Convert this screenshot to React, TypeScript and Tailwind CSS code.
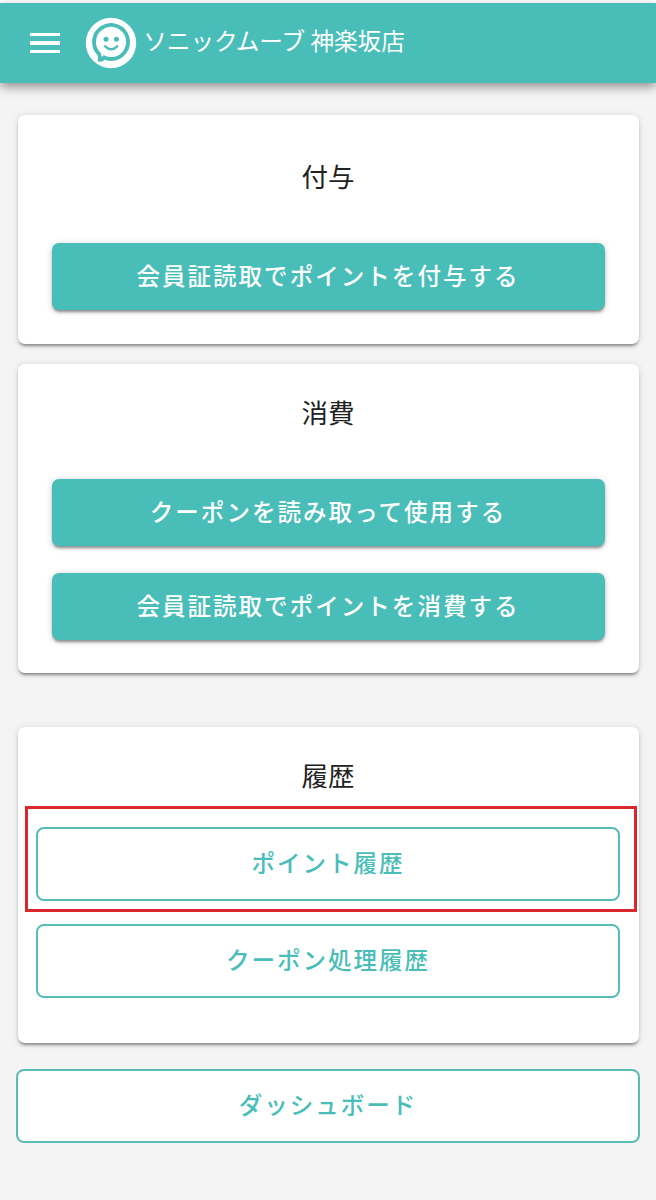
import React from 'react';
import clsx from 'clsx';

interface ButtonProps {
  label: string;
  className?: string;
}

interface CardProps {
  title: string;
  className?: string;
  children: React.ReactNode;
}

const LogoIcon: React.FC = () => (
  <svg className="ml-[24.6px] h-[52px] w-[52px] shrink-0" viewBox="0 0 52 52" fill="none">
    <circle cx="26" cy="26" r="25.2" fill="#fff" />
    {/* Speech bubble */}
    <path
      d="M14.2 37.2A17 17 0 1 1 26 42C23.5 42 21 41.4 19.2 40.4C18.2 42.2 16.6 43 14.6 42.8C15.2 41 15 39 14.2 37.2Z"
      stroke="#49bdb7"
      strokeWidth="3.9"
      strokeLinejoin="round"
    />
    {/* Face */}
    <circle cx="21" cy="22.3" r="2.5" fill="#49bdb7" />
    <circle cx="31.4" cy="22.3" r="2.5" fill="#49bdb7" />
    <path d="M20.2 29.3Q26.2 35.2 32.2 29.3" stroke="#49bdb7" strokeWidth="2.4" strokeLinecap="round" />
  </svg>
);

const Header: React.FC = () => (
  <header className="mt-[3px] flex h-20 items-center bg-[#49bdb7] pl-[30px] text-white shadow-[0_4px_10px_rgba(0,0,0,0.4)]">
    <button className="flex w-[30px] flex-col gap-[5px]" aria-label="menu">
      <span className="h-[3.5px] bg-white" />
      <span className="h-[3.5px] bg-white" />
      <span className="h-[3.5px] bg-white" />
    </button>
    <LogoIcon />
    <h1 className="-mt-[7px] ml-[6.7px] whitespace-nowrap text-[23.6px] leading-8">ソニックムーブ 神楽坂店</h1>
  </header>
);

const Card: React.FC<CardProps> = ({ title, className, children }) => (
  <section
    className={clsx(
      'relative rounded-[7px] bg-white shadow-[0_3px_3px_-1px_rgba(0,0,0,0.38),0_1px_7px_rgba(0,0,0,0.14)]',
      className
    )}
  >
    <h2 className="h-10 text-center text-[26.5px] leading-9 text-[#222]">{title}</h2>
    {children}
  </section>
);

const PrimaryButton: React.FC<ButtonProps> = ({ label, className }) => (
  <button
    className={clsx(
      'block h-[67px] w-full rounded-[7px] bg-[#49bdb7] pb-px text-[23.5px] font-medium tracking-[2.05px] text-white shadow-[0_3px_3px_-1px_rgba(0,0,0,0.38),0_1px_6px_rgba(0,0,0,0.2)]',
      className
    )}
  >
    {label}
  </button>
);

const OutlineButton: React.FC<ButtonProps> = ({ label, className }) => (
  <button
    className={clsx(
      'block h-[74px] w-full rounded-[8px] border-2 border-[#5abcb6] bg-white pb-[2px] text-[23.5px] font-medium tracking-[2px] text-[#49bdb7]',
      className
    )}
  >
    {label}
  </button>
);

const App: React.FC = () => {
  return (
    <div className="flex h-[1200px] w-[656px] flex-col overflow-hidden bg-[#f4f4f4] font-['Noto_Sans_CJK_JP',sans-serif]">
      <div className="-mb-[3px] h-[3px] shrink-0 bg-white" />
      <Header />

      <main className="flex flex-col px-4 pt-8">
        <Card title="付与" className="ml-[2px] mr-px h-[229px] pl-[33.5px] pr-[34.5px] pt-[43px]">
          <PrimaryButton label="会員証読取でポイントを付与する" className="mt-[45px]" />
        </Card>

        <Card title="消費" className="ml-[2px] mr-px mt-5 h-[309px] pl-[33.5px] pr-[34.5px] pt-[30px]">
          <PrimaryButton label="クーポンを読み取って使用する" className="mt-[45px]" />
          <PrimaryButton label="会員証読取でポイントを消費する" className="mt-[27px]" />
        </Card>

        <Card title="履歴" className="ml-[2px] mr-px mt-[54px] h-[316px] pl-[18.4px] pr-[19.4px] pt-[30px]">
          {/* Highlighted item */}
          <div className="absolute left-[7px] top-[79px] h-[106px] w-[612px] border-[3px] border-[#d9262f]" />
          <OutlineButton label="ポイント履歴" className="mt-[30px]" />
          <OutlineButton label="クーポン処理履歴" className="mt-[23px]" />
        </Card>

        <OutlineButton label="ダッシュボード" className="mt-[26px]" />
      </main>
    </div>
  );
};

export default App;
